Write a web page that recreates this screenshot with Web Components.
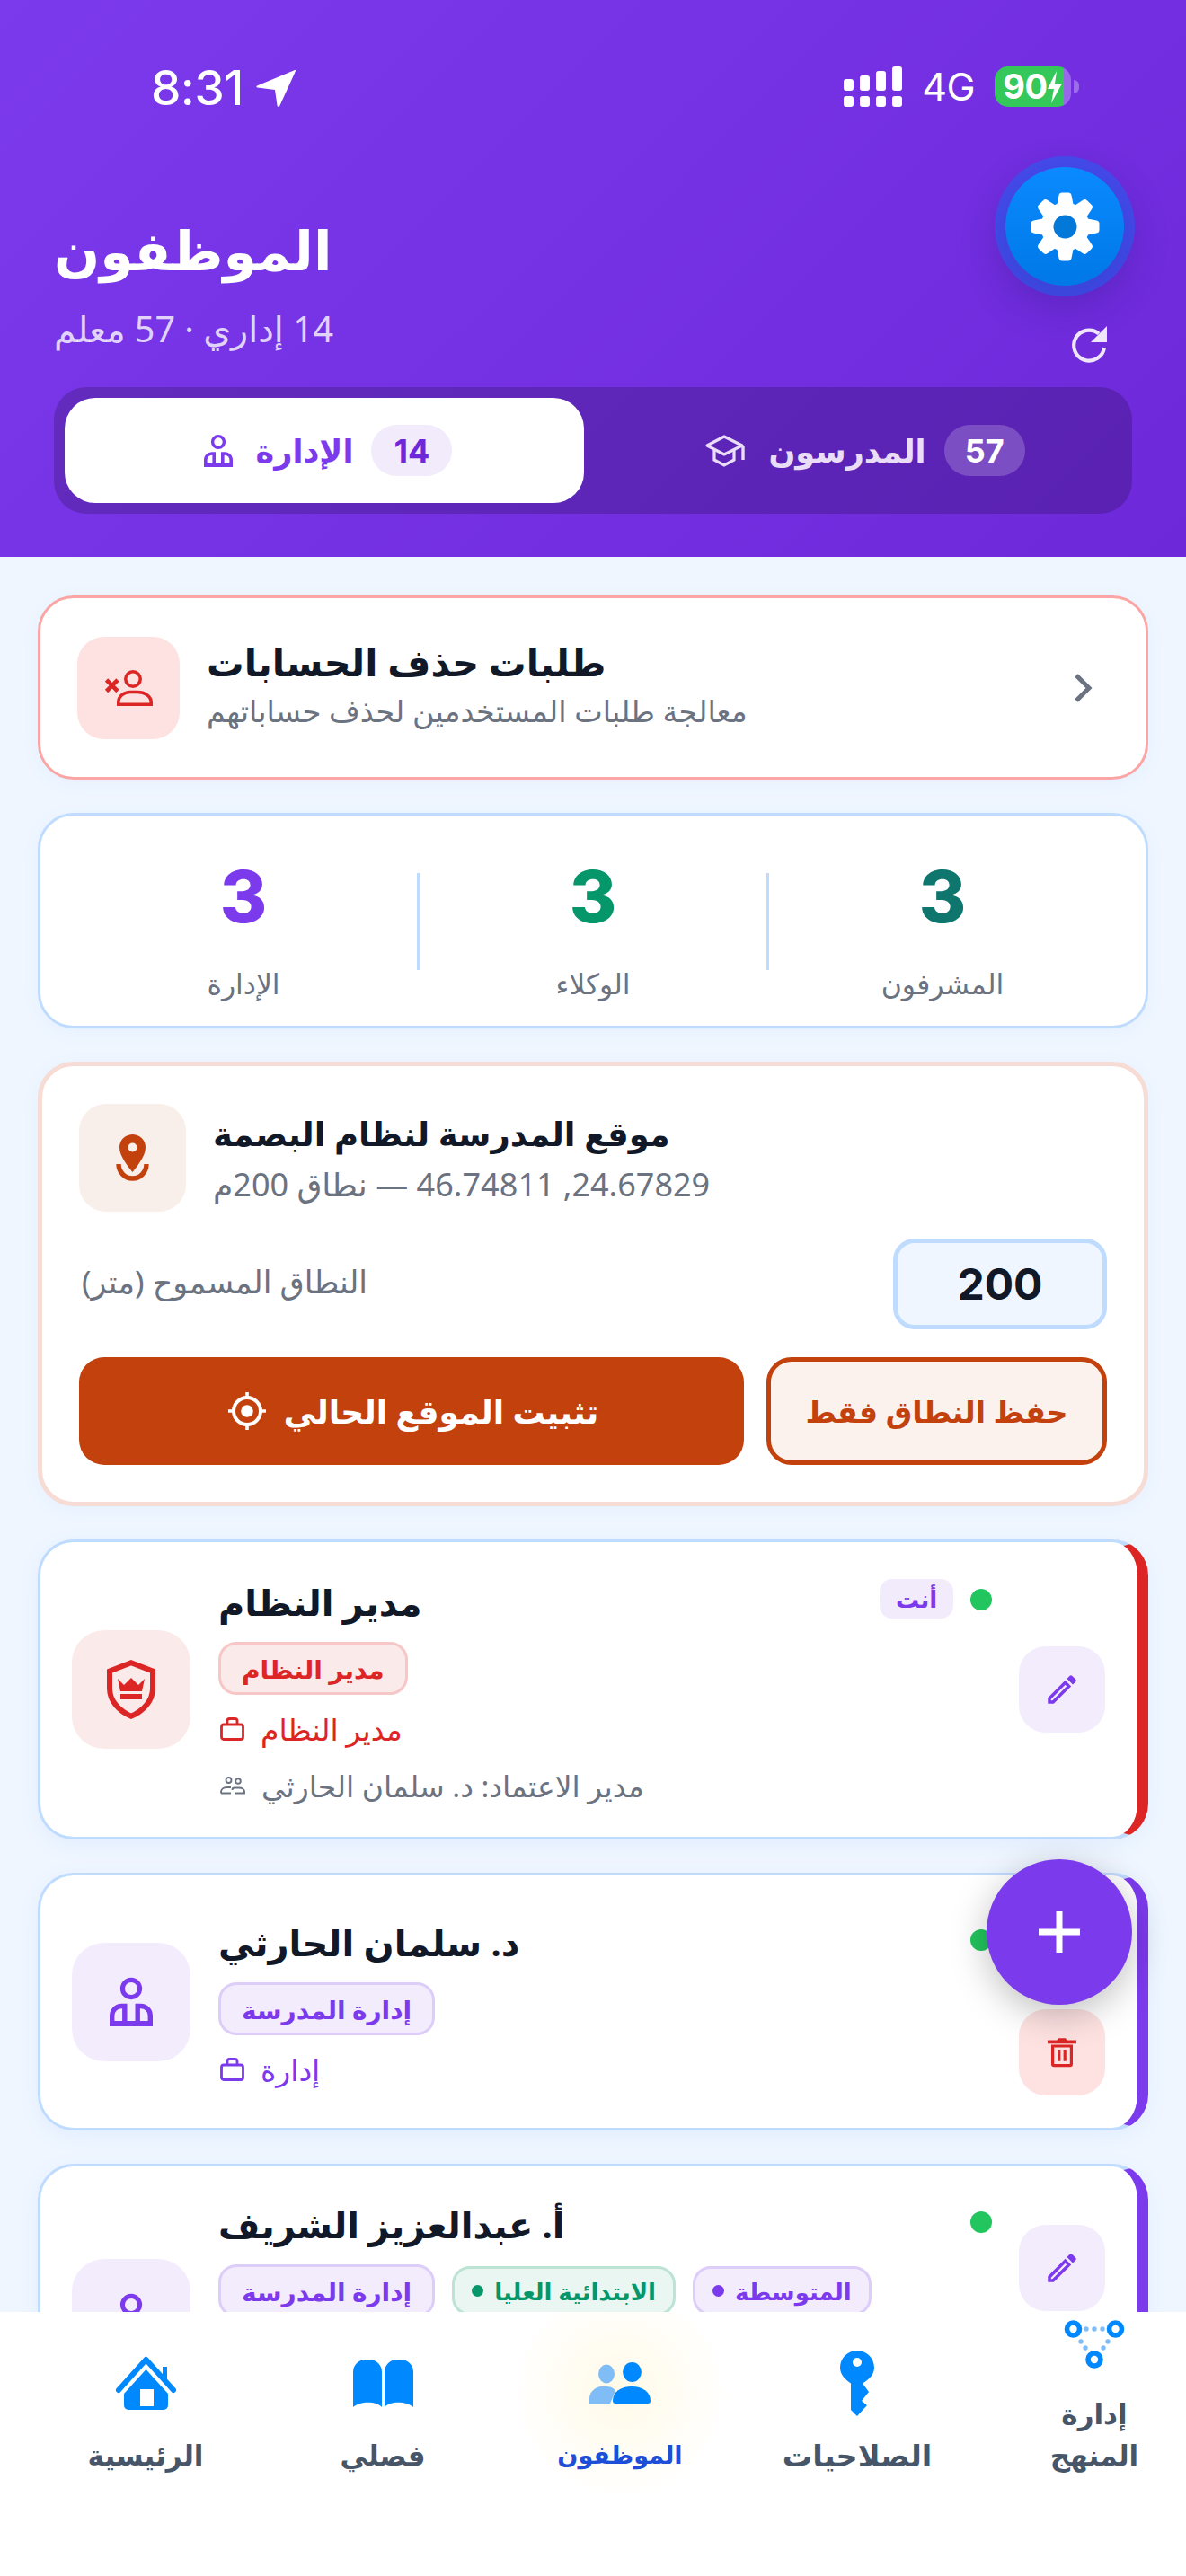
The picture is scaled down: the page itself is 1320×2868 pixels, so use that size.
<!DOCTYPE html>
<html lang="ar">
<head>
<meta charset="utf-8">
<title>الموظفون</title>
<style>
html,body{margin:0;padding:0;background:#eff6ff;}
body{font-family:"Noto Sans","DejaVu Sans",sans-serif;}
</style>
</head>
<body>
<staff-app></staff-app>
<script>
const C='currentColor';
const ICONS={
 gear:[77,77,()=>{let t='';for(let i=0;i<8;i++){t+=`<path transform="rotate(${i*45} 38.5 38.5)" d="M29 16 L31.5 3.5 Q32 0.5 35 .5 H42 Q45 .5 45.5 3.5 L48 16Z" fill="#fff"/>`;}return t+`<circle cx="38.5" cy="38.5" r="27" fill="#fff"/><circle cx="38.5" cy="38.5" r="13" fill="#0278d9"/>`;}],
 refresh:[40,41,()=>`<path d="M31 8.5A17 17 0 1 0 37 24" fill="none" stroke="${C}" stroke-width="4.2"/><path d="M40 0V18H22Z" fill="${C}"/>`],
 admin:[32,36,()=>`<circle cx="16" cy="8" r="6.4" fill="none" stroke="${C}" stroke-width="3.4"/><path d="M1.8 34.2V28a7 7 0 0 1 7-7h2.4V34.2ZM30.2 34.2V28a7 7 0 0 0-7-7h-2.4V34.2Z" fill="none" stroke="${C}" stroke-width="3.6"/><path d="M0 32H32V36H0Z" fill="${C}"/>`],
 cap:[44,36,()=>`<path d="M2 12 21 2 41 12 21 22Z" fill="none" stroke="${C}" stroke-width="3.2" stroke-linejoin="round"/><path d="M10 16V28L21 34 32 28V16" fill="none" stroke="${C}" stroke-width="3.2"/><path d="M42 12V28" stroke="${C}" stroke-width="3.4"/>`],
 userx:[54,40,()=>`<path d="M2.5 11 15 23.5M15 11 2.5 23.5" stroke="${C}" stroke-width="4.6"/><circle cx="32" cy="10" r="8.2" fill="none" stroke="${C}" stroke-width="3.6"/><path d="M15.8 38.2V36C15.8 29 22 24.5 29 24.5H37C45 24.5 52.2 29 52.2 36V38.2Z" fill="none" stroke="${C}" stroke-width="3.6"/>`],
 chev:[20,34,()=>`<path d="M3 3 17 17 3 31" fill="none" stroke="${C}" stroke-width="5"/>`],
 pin:[41,53,()=>`<path fill-rule="evenodd" d="M20.5 0C28.5 0 35 6.4 35 14.4 35 24 26 35 20.5 42 15 35 6 24 6 14.4 6 6.4 12.5 0 20.5 0ZM20.5 9.5a5 5 0 1 0 0 10 5 5 0 0 0 0-10Z" fill="${C}"/><path d="M5 33a15.5 16 0 1 0 31 0" fill="none" stroke="${C}" stroke-width="5.4"/>`],
 target:[42,42,()=>`<circle cx="21" cy="21" r="15" fill="none" stroke="${C}" stroke-width="4"/><circle cx="21" cy="21" r="6.8" fill="${C}"/><path d="M21 0V7M21 35V42M0 21H7M35 21H42" stroke="${C}" stroke-width="3.6"/>`],
 shield:[54,66,()=>`<path d="M27 3.2 51 12.5V32C51 46 40 57 27 62.8 14 57 3 46 3 32V12.5Z" fill="none" stroke="${C}" stroke-width="6"/><path d="M12 21 19 28 27 20 35 28 42 21 39 35H15Z" fill="${C}"/><path d="M15 38H39V44H15Z" fill="${C}"/>`],
 brief:[27,26,()=>`<rect x="1.5" y="8" width="24" height="16.5" rx="2.5" fill="none" stroke="${C}" stroke-width="2.8"/><path d="M8 8V4A2.5 2.5 0 0 1 10.5 1.5H16.5A2.5 2.5 0 0 1 19 4V8" fill="none" stroke="${C}" stroke-width="2.8"/>`],
 people:[28,20,()=>`<g fill="none" stroke="${C}" stroke-width="1.9"><circle cx="9.5" cy="4" r="3"/><circle cx="20" cy="5" r="2.8"/><path d="M1 18.5V17C1 14 4 12 7 12H12M1 18.5H12M16 18.5H27V16.5C27 14 24 12.5 21 12.5H16C14.5 12.5 13.5 13.5 13.5 15"/></g>`],
 edit:[24,24,()=>`<path d="M3 17.25V21h3.75L17.81 9.94l-3.75-3.75L3 17.25zM5.92 19H5v-.92l9.06-9.06.92.92L5.92 19zM20.71 7.04a1 1 0 0 0 0-1.41l-2.34-2.34a1 1 0 0 0-1.41 0l-1.83 1.83 3.75 3.75 1.83-1.83z" fill="${C}"/>`],
 trash:[20,23,()=>`<path d="M2.5 6.5V20a2 2 0 0 0 2 2h11a2 2 0 0 0 2-2V6.5ZM4.5 8.5h11V20h-11Z" fill-rule="evenodd" fill="${C}"/><path d="M0 3.4H6.5L7.5 2H12.5L13.5 3.4H20V5.8H0ZM7 10H9V18H7ZM11 10H13V18H11Z" fill="${C}"/>`],
 plus:[46,46,()=>`<path d="M23 0V46M0 23H46" stroke="#fff" stroke-width="7"/>`],
 home:[67,60,()=>`<path d="M3 38 33.5 4 64 38" fill="none" stroke="${C}" stroke-width="6" stroke-linejoin="round" stroke-linecap="round"/><path d="M52 12H57V31L52 26Z" fill="${C}"/><path d="M33.5 15 58 42V55a5 5 0 0 1-5 5H14a5 5 0 0 1-5-5V42Z" fill="${C}"/><path d="M27 37H42V56H27Z" fill="#fff"/>`],
 book:[67,53,()=>`<path d="M0 14A14 14 0 0 1 14 0H18A14 14 0 0 1 32 14V53C26 46 8 46 0 53Z" fill="${C}"/><path d="M67 14A14 14 0 0 0 53 0H49A14 14 0 0 0 35 14V53C41 46 59 46 67 53Z" fill="${C}"/>`],
 team:[70,47,()=>`<ellipse cx="20" cy="13" rx="9" ry="10.4" fill="#80bdf7"/><path d="M1 46V40C1 33 8 27 15 27H20C26 27 29 30 30 32L24 46Z" fill="#80bdf7"/><ellipse cx="48.5" cy="11" rx="10.4" ry="11" fill="${C}"/><path d="M27 43C27 33 36 27 48 27 60 27 69 33 69 43Q69 46 66 46H30Q27 46 27 43Z" fill="${C}" stroke="#fff" stroke-width="0"/>`],
 key:[38,73,()=>`<path fill-rule="evenodd" d="M19 0C29.5 0 38 8.5 38 19 38 26 33 32 25 36.5L32 46 24 56 30 61 19 73 12 66V36.5C5 32 0 26 0 19 0 8.5 8.5 0 19 0ZM19 8a5 5 0 1 0 0 10 5 5 0 0 0 0-10Z" fill="${C}"/>`],
 tree:[66,54,()=>`<g fill="none" stroke="${C}" stroke-width="5.6"><circle cx="9.5" cy="10" r="7"/><circle cx="56.5" cy="10" r="7"/><circle cx="33" cy="44" r="7"/></g><g fill="#80bdf7"><circle cx="24" cy="10" r="2.7"/><circle cx="33" cy="10" r="2.7"/><circle cx="42" cy="10" r="2.7"/><circle cx="18" cy="24" r="2.7"/><circle cx="23" cy="31" r="2.7"/><circle cx="43" cy="31" r="2.7"/><circle cx="48" cy="24" r="2.7"/></g>`],
 arrow:[44,41,()=>`<path d="M44 1 26 40.5C25 41 24 41 23.6 40L21 22 1.5 19.5C.2 19 .2 18 1 17.4L42.5 .3C43.7-.2 44.3 .2 44 1Z" fill="#fff"/>`],
 signal:[65,45,()=>[[0,14],[18,10],[36,5],[54,0]].map(([x,y])=>`<rect x="${x}" y="${y}" width="11" height="${27-y}" rx="3" fill="#fff"/><rect x="${x}" y="33" width="11" height="12" rx="3" fill="#fff"/>`).join('')],
};
const def=(name,css,html,init)=>{customElements.define(name,class extends HTMLElement{
  connectedCallback(){ if(this.shadowRoot) return; const r=this.attachShadow({mode:'open'});
    const a=n=>this.getAttribute(n)||''; r.innerHTML=`<style>${css(a)}</style>${html(a,this)}`; if(init)init(r,this);}
});};
const ar=`direction:rtl;unicode-bidi:isolate;`;
const F=`"Noto Sans","DejaVu Sans",sans-serif`;

def('app-icon',a=>`:host{display:inline-flex;flex:none;line-height:0;align-items:center;justify-content:center}svg{display:block;overflow:visible}`,
 a=>{const [w,h,f]=ICONS[a('name')];const s=+(a('scale')||1);return `<svg width="${w*s}" height="${h*s}" viewBox="0 0 ${w} ${h}">${f()}</svg>`});

def('status-bar',a=>`:host{display:flex;align-items:flex-start;justify-content:space-between;height:186px;box-sizing:border-box;padding:76px 119px 0 168px;color:#fff;font-family:Inter,sans-serif}
 .l,.r{display:flex;align-items:center;height:45px}
 .r{margin-top:-2px}
 .t{font-size:53px;font-weight:500;letter-spacing:-.5px;line-height:45px;margin-right:14px}
 .g{font-size:43px;font-weight:400;line-height:45px;margin:0 22px 0 22px;letter-spacing:-.5px}
 .b{width:85px;height:45px;border-radius:15px;background:linear-gradient(90deg,#34c759 0 77px,rgba(255,255,255,.28) 77px);display:flex;align-items:center;justify-content:center;font-size:38px;font-weight:700;line-height:45px;letter-spacing:-.3px}
 .b svg{margin-left:-1px}
 .tip{width:6px;height:15px;background:rgba(255,255,255,.3);border-radius:0 8px 8px 0;margin-left:3px}`,
 a=>`<div class="l"><span class="t">8:31</span><app-icon name="arrow"></app-icon></div>
 <div class="r"><app-icon name="signal"></app-icon><span class="g">4G</span><span class="b">90<svg width="18" height="36" viewBox="0 0 18 36"><path d="M11 0 1 20H8L5 36 17 14H9Z" fill="#fff"/></svg></span><span class="tip"></span></div>`);

def('settings-button',a=>`:host{display:flex;width:132px;height:132px;border-radius:50%;align-items:center;justify-content:center;background:linear-gradient(180deg,#0a8aff,#0078e6 100%);box-shadow:0 0 0 12px rgba(0,122,255,.38),0 16px 40px 8px rgba(40,20,120,.28);margin-right:9px}`,
 a=>`<app-icon name="gear"></app-icon>`);

def('tab-item',a=>`:host{display:flex;flex:1;align-items:center;justify-content:center;height:117px;box-sizing:border-box;padding-left:${a('active')?8:4}px;border-radius:34px;font-family:${F};
   ${a('active')?'background:#fff;color:#7c3aed;':'color:#e9ddf7;'}}
 app-icon{margin-right:26px}
 .lb{font-size:35px;font-weight:700;${ar}line-height:50px;margin-right:20px}
 .bd{display:flex;align-items:center;justify-content:center;min-width:90px;height:57px;border-radius:29px;font-family:Inter,sans-serif;font-size:36px;font-weight:700;
   ${a('active')?'background:#f1ebfb;color:#6d28d9;':'background:rgba(255,255,255,.2);color:#fff;'}}`,
 a=>`<app-icon name="${a('icon')}"></app-icon><span class="lb"><slot></slot></span><span class="bd">${a('count')}</span>`);

def('page-header',a=>`:host{display:block;flex:none;height:620px;box-sizing:border-box;background:linear-gradient(135deg,#7c3aed 0%,#6d28d9 100%);color:#fff;font-family:${F}}
 .wrap{padding:0 60px}
 .row{display:flex;justify-content:space-between;height:245px}
 .ttl{padding-top:50px}
 h1{margin:0;font-size:60px;line-height:84px;font-weight:700;${ar};text-align:left}
 .sub{font-size:39.5px;line-height:50px;color:rgba(255,255,255,.8);${ar};text-align:left;margin-top:21px}
 .act{display:flex;flex-direction:column;align-items:flex-end}
 .re{margin-top:45px;margin-right:28px;color:#efe6fb}
 .tabs{display:flex;gap:24px;padding:12px;height:141px;box-sizing:border-box;border-radius:36px;background:rgba(0,0,0,.18)}`,
 a=>`<status-bar></status-bar><div class="wrap"><div class="row"><div class="ttl"><h1>الموظفون</h1><div class="sub">14 إداري · 57 معلم</div></div>
 <div class="act"><settings-button></settings-button><app-icon class="re" name="refresh"></app-icon></div></div>
 <div class="tabs"><tab-item active="1" icon="admin" count="14">الإدارة</tab-item><tab-item icon="cap" count="57">المدرسون</tab-item></div></div>`);

def('request-card',a=>`:host{display:flex;flex:none;align-items:center;height:205px;box-sizing:border-box;background:#fff;border:3px solid #fca5a5;border-radius:40px;padding:0 60px 0 41px;box-shadow:0 4px 20px rgba(59,130,246,.05);font-family:${F}}
 .ic{width:114px;height:114px;border-radius:30px;background:#fee2e2;color:#dc2626;display:flex;align-items:center;justify-content:center;margin:0 30px 0 0;flex:none}
 .tx{flex:1;margin-top:-6px}
 .a{font-size:41.5px;font-weight:700;line-height:58px;color:#111827;${ar};text-align:left;margin-top:-4px}
 .b{font-size:33.5px;line-height:46px;color:#6b7280;${ar};text-align:left;margin-top:2px}
 .ch{color:#6b7280}`,
 a=>`<div class="ic"><app-icon name="userx"></app-icon></div><div class="tx"><div class="a">طلبات حذف الحسابات</div><div class="b">معالجة طلبات المستخدمين لحذف حساباتهم</div></div><app-icon class="ch" name="chev"></app-icon>`);

def('stat-cell',a=>`:host{display:flex;flex:1;flex-direction:column;align-items:center;font-family:${F}}
 .n{font-family:Inter,sans-serif;font-size:80px;font-weight:800;line-height:84px;color:${a('color')}}
 .l{font-size:31.5px;line-height:46px;color:#6b7280;margin-top:32px;${ar}}`,
 a=>`<div class="n">${a('n')}</div><div class="l"><slot></slot></div>`);
def('stats-card',a=>`:host{display:flex;flex:none;align-items:flex-start;height:240px;box-sizing:border-box;background:#fff;border:3px solid #bfdbfe;border-radius:40px;padding:48px 33px 0;box-shadow:0 4px 20px rgba(59,130,246,.05)}
 i{display:block;width:3px;height:108px;background:#bfdbfe;flex:none;margin:16px 0 0}`,
 a=>`<stat-cell n="3" color="#7c3aed">الإدارة</stat-cell><i></i><stat-cell n="3" color="#059669">الوكلاء</stat-cell><i></i><stat-cell n="3" color="#0f766e">المشرفون</stat-cell>`);

def('location-card',a=>`:host{display:block;flex:none;height:495px;box-sizing:border-box;background:#fff;border:5px solid #f6dcd4;border-radius:40px;padding:42px 41px 0;box-shadow:0 4px 20px rgba(59,130,246,.05);font-family:${F}}
 .top{display:flex;align-items:center;gap:30px;height:120px}
 .ic{width:119px;height:120px;border-radius:30px;background:#f9efea;color:#c2410c;display:flex;align-items:center;justify-content:center;flex:none}
 .a{font-size:37px;font-weight:700;line-height:56px;color:#111827;${ar};text-align:left}
 .b{font-size:36px;line-height:50px;color:#6b7280;${ar};text-align:left;margin-top:4px}
 .mid{display:flex;align-items:center;justify-content:space-between;margin-top:30px;height:101px;padding-left:3px}
 .lbl{font-size:35px;line-height:46px;color:#6b7280;${ar};margin-top:-6px}
 .inp{width:238px;height:101px;box-sizing:border-box;border:5px solid #bfdbfe;border-radius:24px;background:#eff6ff;display:flex;align-items:center;justify-content:center;font-family:Inter,sans-serif;font-size:48px;font-weight:700;color:#111827}
 .btns{display:flex;gap:25px;margin-top:31px;height:120px}
 .pri{flex:none;width:740px;background:#c2410c;border-radius:28px;color:#fff;display:flex;align-items:center;justify-content:center;gap:20px;padding-left:4px;box-sizing:border-box;font-size:36px;font-weight:700}
 .sec{flex:1;box-sizing:border-box;background:#fbf2ee;border:5px solid #c2410c;border-radius:28px;color:#c2410c;display:flex;align-items:center;justify-content:center;font-size:33px;font-weight:700}
 .pri span,.sec span{${ar}}`,
 a=>`<div class="top"><div class="ic"><app-icon name="pin"></app-icon></div><div><div class="a">موقع المدرسة لنظام البصمة</div><div class="b">24.67829, 46.74811 — نطاق 200م</div></div></div>
 <div class="mid"><span class="lbl">النطاق المسموح (متر)</span><div class="inp">200</div></div>
 <div class="btns"><div class="pri"><app-icon name="target"></app-icon><span>تثبيت الموقع الحالي</span></div><div class="sec"><span>حفظ النطاق فقط</span></div></div>`);

def('role-chip',a=>`:host{display:inline-flex;align-items:center;box-sizing:border-box;height:${a('h')||59}px;padding:0 ${a('pad')||23}px;border-radius:20px;border:3px solid ${a('line')};background:${a('bg')};color:${a('fg')};font-size:${a('fs')||28}px;font-weight:700;gap:12px;font-family:${F}}
 span{${ar}} i{display:${a('dot')?'block':'none'};width:13px;height:13px;border-radius:50%;background:${a('fg')};flex:none}`,
 a=>`<i></i><span><slot></slot></span>`);

def('mini-btn',a=>`:host{display:flex;width:96px;height:96px;border-radius:30px;align-items:center;justify-content:center;background:${a('bg')};color:${a('fg')}}`,
 a=>`<app-icon name="${a('icon')}" scale="${a('scale')}"></app-icon>`);

def('staff-card',a=>`:host{display:flex;align-items:center;box-sizing:border-box;flex:none;background:#fff;border:3px solid #bfdbfe;border-right:12px solid ${a('accent')};border-radius:40px;padding:36px 36px 36px 35px;gap:31px;box-shadow:0 6px 24px rgba(59,130,246,.07);font-family:${F};${a('h')?`height:${a('h')}px;`:''}}
 .av{width:132px;height:132px;border-radius:36px;background:${a('tint')};color:${a('accent')};display:flex;align-items:center;justify-content:center;flex:none}
 .md{flex:1;min-width:0;${a('tall')?'align-self:flex-start;':''}}
 .top{display:flex;align-items:center;justify-content:space-between;height:58px;margin-bottom:15px}
 .nm{font-size:40px;font-weight:700;line-height:58px;color:#111827;${ar}}
 .rt{display:flex;align-items:center;gap:19px}
 .dot{width:24px;height:24px;border-radius:50%;background:#22c55e;margin-top:-6px}
 .you{display:flex;align-items:center;justify-content:center;width:82px;height:44px;border-radius:14px;background:#f1ebfb;color:#7c3aed;font-size:26px;font-weight:700;margin-top:-8px;${ar}}
 .ac{display:flex;flex-direction:column;gap:16px;flex:none;margin-left:-1px}`,
 (a,el)=>`<div class="av"><app-icon name="${a('icon')}" scale="${a('iconscale')||1}"></app-icon></div>
 <div class="md"><div class="top"><span class="nm">${a('name')}</span><span class="rt">${a('you')?'<span class="you">أنت</span>':''}<span class="dot"></span></span></div><slot></slot></div>
 <div class="ac">${a('noedit')?'':'<mini-btn icon="edit" scale="1.75" bg="#f3ecfd" fg="#7c3aed"></mini-btn>'}${a('del')?'<mini-btn icon="trash" scale="1.6" bg="#fee2e2" fg="#dc2626"></mini-btn>':''}</div>`);

def('chip-row',a=>`:host{display:flex;align-items:center;gap:19px;margin-bottom:19px}`,a=>`<slot></slot>`);
def('info-line',a=>`:host{display:flex;align-items:center;gap:18px;height:38px;margin-bottom:${a('mb')||0}px;color:${a('color')};font-family:${F};font-size:${a('fs')||33}px}
 span{${ar}} app-icon{margin-left:2px}`,a=>`<app-icon name="${a('icon')}"></app-icon><span><slot></slot></span>`);

def('nav-item',a=>`:host{display:flex;flex:0 0 264px;flex-direction:column;align-items:center;justify-content:flex-end;box-sizing:border-box;padding-bottom:112px;font-family:${F};color:${a('active')?'#1d4ed8':'#475569'};
   ${a('active')?'background:radial-gradient(circle 118px at 50% calc(100% - 205px),rgba(255,204,0,.09),rgba(255,204,0,.02) 85%,transparent);':''}}
 .i{height:76px;display:flex;align-items:center;justify-content:center;color:#0088ff;margin-bottom:19px}
 .t{font-size:${a('fs')||31}px;font-weight:700;line-height:46px;text-align:center;${ar};max-width:${a('wrap')?'130px':'none'}}`,
 a=>`<div class="i"><app-icon name="${a('icon')}"></app-icon></div><div class="t"><slot></slot></div>`);
def('bottom-nav',a=>`:host{display:flex;flex:none;height:294px;background:#fff;position:relative;z-index:2;box-sizing:border-box;padding-left:30px;overflow:hidden}`,a=>`<slot></slot>`);

def('fab-button',a=>`:host{position:absolute;left:1098px;top:2070px;z-index:3;width:162px;height:162px;border-radius:50%;background:#7c3aed;display:flex;align-items:center;justify-content:center;box-shadow:0 10px 40px rgba(0,0,0,.25)}`,
 a=>`<app-icon name="plus"></app-icon>`);

def('staff-app',a=>`:host{display:flex;flex-direction:column;width:1320px;height:2868px;overflow:hidden;position:relative;background:#eff6ff}
 main{flex:1;min-height:0;overflow:hidden;display:flex;flex-direction:column;gap:37px;padding:43px 42px 0}`,
 a=>`<page-header></page-header>
 <main>
  <request-card></request-card>
  <stats-card></stats-card>
  <location-card></location-card>
  <staff-card name="مدير النظام" you="1" accent="#dc2626" tint="#fbeaea" icon="shield" iconscale="1" h="334">
    <chip-row><role-chip line="#f7c6c6" bg="#fbeaea" fg="#dc2626">مدير النظام</role-chip></chip-row>
    <info-line icon="brief" color="#dc2626" mb="25">مدير النظام</info-line>
    <info-line icon="people" color="#6b7280">مدير الاعتماد: د. سلمان الحارثي</info-line>
  </staff-card>
  <staff-card name="د. سلمان الحارثي" accent="#7c3aed" tint="#f3ecfd" icon="admin" iconscale="1.5" del="1" h="287">
    <chip-row><role-chip line="#ddcdf9" bg="#f3ecfd" fg="#7c3aed">إدارة المدرسة</role-chip></chip-row>
    <info-line icon="brief" color="#7c3aed">إدارة</info-line>
  </staff-card>
  <staff-card name="أ. عبدالعزيز الشريف" accent="#7c3aed" tint="#f3ecfd" icon="admin" iconscale="1.5" del="1" h="344" tall="1">
    <chip-row>
      <role-chip line="#ddcdf9" bg="#f3ecfd" fg="#7c3aed">إدارة المدرسة</role-chip>
      <role-chip h="55" pad="19" fs="26" dot="1" line="#bde3d5" bg="#e9f6f1" fg="#059669">الابتدائية العليا</role-chip>
      <role-chip h="55" pad="19" fs="26" dot="1" line="#ddcdf9" bg="#f3ecfd" fg="#7c3aed">المتوسطة</role-chip>
    </chip-row>
  </staff-card>
 </main>
 <bottom-nav>
  <nav-item icon="home">الرئيسية</nav-item>
  <nav-item icon="book">فصلي</nav-item>
  <nav-item icon="team" active="1" fs="27">الموظفون</nav-item>
  <nav-item icon="key" fs="33.5">الصلاحيات</nav-item>
  <nav-item icon="tree" wrap="1">إدارة المنهج</nav-item>
 </bottom-nav>
 <fab-button></fab-button>`);
</script>
</body>
</html>
